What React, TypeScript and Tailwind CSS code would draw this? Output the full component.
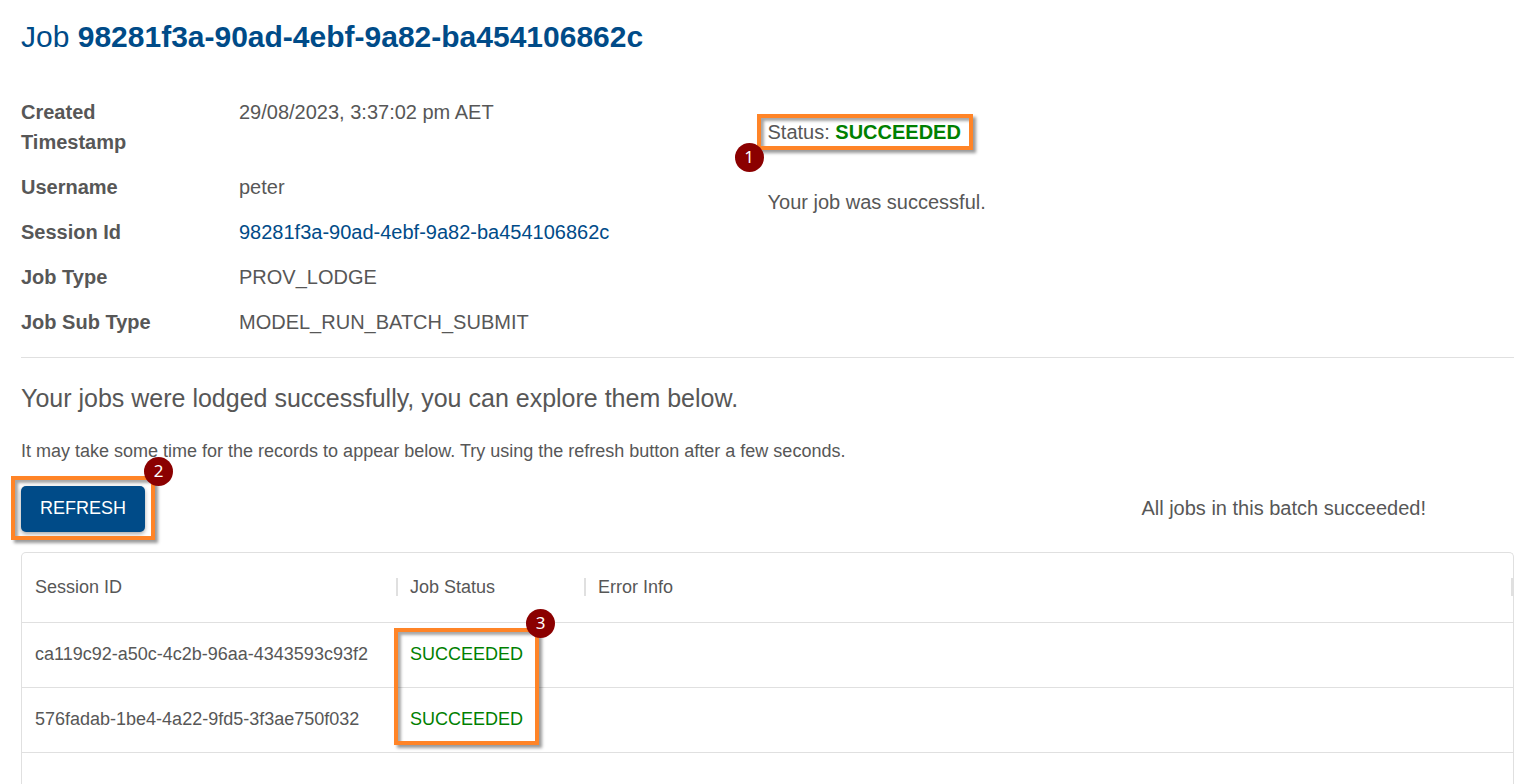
import type { ReactNode } from "react";

const SESSION_ID = "98281f3a-90ad-4ebf-9a82-ba454106862c";

const details: { label: string; value: ReactNode }[] = [
  { label: "Created Timestamp", value: "29/08/2023, 3:37:02 pm AET" },
  { label: "Username", value: "peter" },
  {
    label: "Session Id",
    value: (
      <a href="#session" className="text-[#004b88]">
        {SESSION_ID}
      </a>
    ),
  },
  { label: "Job Type", value: "PROV_LODGE" },
  { label: "Job Sub Type", value: "MODEL_RUN_BATCH_SUBMIT" },
];

const jobs = [
  { id: "ca119c92-a50c-4c2b-96aa-4343593c93f2", status: "SUCCEEDED", error: "" },
  { id: "576fadab-1be4-4a22-9fd5-3f3ae750f032", status: "SUCCEEDED", error: "" },
];

/* Orange call-out frame with a numbered marker, laid over the content it points at. */
function Callout({ n, frame, marker }: { n: number; frame: string; marker: string }) {
  return (
    <div
      className={`pointer-events-none absolute border-4 border-[#ff8427] shadow-[3px_3px_3px_rgba(0,0,0,0.4),inset_3px_3px_3px_rgba(0,0,0,0.35)] ${frame}`}
    >
      <span
        className={`absolute flex size-[29px] items-center justify-center rounded-full bg-[#8b0000] pb-0.5 font-['Noto_Sans',sans-serif] text-[17px] leading-none text-white ${marker}`}
      >
        {n}
      </span>
    </div>
  );
}

function HeaderCell({ children, width }: { children: string; width: string }) {
  return (
    <th scope="col" className={`p-0 pb-px pl-3 font-normal first:pl-[13px] ${width}`}>
      <div className="flex items-center justify-between">
        <span>{children}</span>
        <span className="h-[18px] w-0.5 bg-[#e0e0e0]" />
      </div>
    </th>
  );
}

export default function App() {
  return (
    <main className="flex min-h-screen flex-col bg-white pr-[25px] pl-[21px] font-['Liberation_Sans',Arial,sans-serif] text-xl leading-[30px] text-[#575757]">
      <h1 className="pt-[18px] text-[30px] leading-[38px] text-[#004b88]">
        Job <strong>{SESSION_ID}</strong>
      </h1>

      <section className="mt-[41px] grid grid-cols-2 border-b border-[#e0e0e0] pb-5">
        <dl className="grid grid-cols-[218px_1fr] gap-y-[15px]">
          {details.map((d) => (
            <div key={d.label} className="contents">
              <dt className="pr-16 font-bold">{d.label}</dt>
              <dd>{d.value}</dd>
            </div>
          ))}
        </dl>
        <div className="pt-5">
          <div className="relative w-fit">
            Status: <strong className="text-[#008000]">SUCCEEDED</strong>
            <Callout n={1} frame="-top-[3px] -bottom-[3px] -left-[11px] -right-3" marker="top-[25px] -left-[26px]" />
          </div>
          <p className="mt-10">Your job was successful.</p>
        </div>
      </section>

      <h2 className="mt-[25px] text-[25px]">Your jobs were lodged successfully, you can explore them below.</h2>
      <p className="mt-[23px] text-lg leading-[30px]">
        It may take some time for the records to appear below. Try using the refresh button after a few seconds.
      </p>

      <div className="mt-5 flex items-center justify-between pr-[88px]">
        <div className="relative">
          <button
            type="button"
            className="block h-[46px] w-[124px] rounded-[5px] bg-[#004b88] pb-0.5 text-lg text-white shadow-[0_2px_4px_rgba(0,0,0,0.35)]"
          >
            REFRESH
          </button>
          <Callout n={2} frame="-inset-[10px] -bottom-2" marker="-top-[23px] -right-[22px]" />
        </div>
        <p className="pb-0.5">All jobs in this batch succeeded!</p>
      </div>

      <div className="relative mt-5 flex-1 rounded-t-[5px] border-x border-t border-[#e0e0e0] text-lg">
        <table className="w-full table-fixed border-collapse text-left">
          <thead>
            <tr className="h-[69px] border-b border-[#e0e0e0]">
              <HeaderCell width="w-[376px]">Session ID</HeaderCell>
              <HeaderCell width="w-[188px]">Job Status</HeaderCell>
              <HeaderCell width="w-auto">Error Info</HeaderCell>
            </tr>
          </thead>
          <tbody>
            {jobs.map((job) => (
              <tr key={job.id} className="h-[65px] border-b border-[#e0e0e0]">
                <td className="p-0 pb-0.5 pl-[13px]">{job.id}</td>
                <td className="p-0 pb-0.5 pl-3 text-[#008000]">{job.status}</td>
                <td className="p-0 pb-0.5 pl-3">{job.error}</td>
              </tr>
            ))}
          </tbody>
        </table>
        <Callout n={3} frame="top-[75px] left-[372px] h-[117px] w-[145px]" marker="-top-[23px] -right-[20px]" />
      </div>
    </main>
  );
}
